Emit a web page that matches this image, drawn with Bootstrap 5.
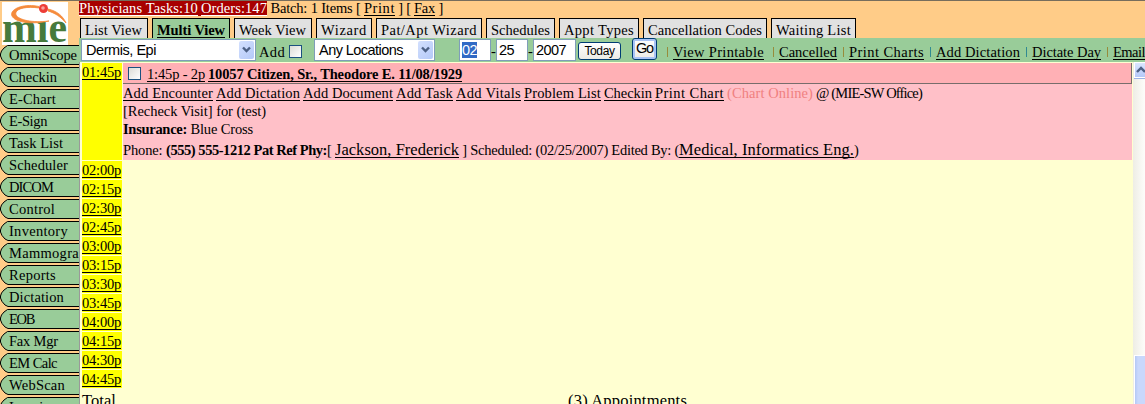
<!DOCTYPE html>
<html lang="en"><head><meta charset="utf-8"><title>Scheduler</title>
<link rel="stylesheet" href="https://cdn.jsdelivr.net/npm/bootstrap@5.3.0/dist/css/bootstrap.min.css">
<style>
body{width:1145px;height:404px;overflow:hidden;background:#ffcc88;color:#000;font:14.5px/18px "Liberation Serif",serif;border-top:1px solid #776d5c}
a{color:#000;text-decoration:underline;text-underline-offset:2px;text-decoration-thickness:1px;text-decoration-skip-ink:none}
[data-w]{white-space:pre;display:inline-block;flex:none}
.side{width:79px;height:403px;flex:none;overflow:hidden}
.logo{display:block;margin:1px 0 0 2px}
.pill{position:relative;height:20px;margin-bottom:2px;line-height:21px;padding-left:9px;white-space:nowrap;overflow:hidden}
.pill svg{position:absolute;left:0;top:0}
.pill span{position:relative}
.main{width:1066px;flex:none;height:403px;overflow:hidden}
.topline{height:17px;line-height:14px}
.alerts{background:#a80000;height:15px;gap:3px}
.alerts a{color:#fff}
.tabs{height:20px;gap:4px;padding-left:1px}
.tab-i{border:1px solid #000;border-bottom:0;background:#e1e1e1;height:21px;line-height:22px;padding-left:4px;flex:none;overflow:hidden}
.tab-i a{text-decoration:none}
.tab-i.on{background:#99cc99;font-weight:bold}.tab-i.on a{text-decoration:underline}
.tools{background:#99cc99;height:24px;position:relative}
.field{background:#fff;border:1px solid #7f9db9;height:22px;font:14.5px/21px "Liberation Sans",sans-serif;padding-left:4px;flex:none;margin-top:1px;position:relative}
.arr{position:absolute;right:1px;top:1px;width:15px;height:18px;background:linear-gradient(135deg,#d3e0fe,#b4c9f8);border-radius:2px}
.arr svg{position:absolute;left:3px;top:5px}
.chk{width:13px;height:13px;border:1px solid #1c5180;background:linear-gradient(135deg,#dcdcd7,#fff);flex:none}
.xb{font-family:"Liberation Sans",sans-serif;border:1px solid #003c74;border-radius:3px;background:linear-gradient(#fff,#ecebe5);text-align:center;flex:none}
.sep{background:#978c3c;width:1px;height:10px;margin:3px 1px 0;flex:none}
.sep.b{background:#318a92}
.grid-area{background:#ffffd1;border-left:1px solid #999;width:1054px;height:342px;padding:1px 1px 0 2px;flex:none}
.tm{width:40px;background:#ffff00;flex:none}
.appt{background:#ffc0c8;width:1009px;height:97px;margin-left:1px}
.ahead{background:#ffb0b5;height:21px;border-right:1px solid #776d6c;border-bottom:1px solid #776d6c;padding-left:5px}
.big{font-size:16.5px}
.slot{height:18px;margin-top:1px;line-height:19px}
.sb{width:12px;height:342px;background:linear-gradient(90deg,#eeede5,#fdfdfa);flex:none;padding-left:1px}
.up{height:16px;background:linear-gradient(#dbe6ff,#b5c9f9);border:1px solid #fff;border-right:0;box-shadow:0 1px #9cb3e6}
.thumb{margin-top:277px;height:60px;background:linear-gradient(90deg,#b4c8f6,#c9d8fc 30%);border:1px solid #fff;border-right:0}
</style></head><body>
<div class="d-flex">
<aside class="side" id="side"><svg class="logo" width="66" height="43" viewBox="0 0 66 43"><rect width="66" height="43" fill="#fff"/><text transform="translate(0 39.500) scale(1 1.12)" font-family="Liberation Serif" font-weight="bold" font-size="40" textLength="65" lengthAdjust="spacingAndGlyphs" fill="#467a3c">mıe</text><path d="M37 4.500C22 1 7 7 10 14c3 6 18 9 37 5-17 2-30-1-33-6-2-6 9-9 23-7zM46 7c9 2 15 7 18 14-5-6-11-10-18-12z" fill="#f58b3c" stroke="#f58b3c" stroke-width=".8"/><circle cx="41.500" cy="6.500" r="4.500" fill="#ed3d37"/><circle cx="41" cy="6" r="1.800" fill="#f9a19b"/></svg></aside>
<main class="main">
<div class="topline d-flex"><div class="alerts d-flex"><a href="#" data-w="119">Physicians Tasks:10</a><a href="#" data-w="66">Orders:147</a></div><span data-w="97"> Batch: 1 Items [ </span><a href="#" data-w="31">Print</a><span data-w="19"> ] [ </span><a href="#" data-w="21">Fax</a><span data-w="8"> ]</span></div>
<nav class="tabs d-flex" id="tabs"></nav>
<div class="tools d-flex">
<div class="field" style="width:175px;margin-left:2px"><span data-w="70">Dermis, Epi</span><i class="arr"><svg width="9" height="8"><path d="M1 1.5l3.500 3.500L8 1.500" fill="none" stroke="#4d6185" stroke-width="2.4"/></svg></i></div>
<span style="padding-top:5px;margin-left:3px" data-w="26">Add</span><i class="chk" style="margin:7px 0 0 4px"></i>
<div class="field" style="width:121px;margin-left:12px"><span data-w="84">Any Locations</span><i class="arr"><svg width="9" height="8"><path d="M1 1.5l3.500 3.500L8 1.500" fill="none" stroke="#4d6185" stroke-width="2.4"/></svg></i></div>
<div class="field" style="width:32px;margin-left:24px;padding:2px 0 0 2px;line-height:16px"><span data-w="15" style="background:#316ac5;color:#fff">02</span></div><span class="mt-1" data-w="5">-</span>
<div class="field" style="width:32px;padding-left:2px"><span data-w="15">25</span></div><span class="mt-1" data-w="5">-</span>
<div class="field" style="width:43px;padding-left:2px"><span data-w="30">2007</span></div>
<div class="xb" style="width:43px;height:18px;margin:4px 0 0 2px;font-size:12px;line-height:17px"><span data-w="30">Today</span></div>
<div class="xb" style="width:25px;height:22px;margin:0 9px 0 11px;font-size:14.5px;line-height:19px;box-shadow:inset 0 0 0 2px #a9c4f5"><span data-w="17">Go</span></div>
<div class="d-flex" id="links" style="padding-top:6px;line-height:17px"></div>
</div>
<div class="d-flex"><div class="grid-area">
<div class="d-flex"><div class="tm"><a href="#" data-w="39">01:45p</a></div>
<div class="appt"><div class="ahead d-flex"><i class="chk" style="margin:4px 6px 0 0"></i><div style="padding-top:2px"><a href="#" data-w="58">1:45p - 2p</a><span data-w="3"> </span><b><a href="#" data-w="254">10057 Citizen, Sr., Theodore E. 11/08/1929</a></b></div></div>
<div class="d-flex" style="gap:3px"><a href="#" data-w="90">Add Encounter</a><a href="#" data-w="84">Add Dictation</a><a href="#" data-w="90">Add Document</a><a href="#" data-w="57">Add Task</a><a href="#" data-w="65">Add Vitals</a><a href="#" data-w="77">Problem List</a><a href="#" data-w="48">Checkin</a><a href="#" data-w="69">Print Chart</a><span data-w="86" style="color:#f08080">(Chart Online)</span><span data-w="106">@ (MIE-SW Office)</span></div>
<div><span data-w="143">[Recheck Visit] for (test)</span></div>
<div><b data-w="64">Insurance:</b><span data-w="66"> Blue Cross</span></div>
<div class="d-flex align-items-baseline" style="padding-top:3px"><span data-w="43">Phone: </span><b data-w="161">(555) 555-1212 Pat Ref Phy:</b><span data-w="8">[ </span><a class="big" href="#" data-w="124">Jackson, Frederick</a><span data-w="220"> ] Scheduled: (02/25/2007) Edited By: (</span><a class="big" href="#" data-w="175">Medical, Informatics Eng.</a><span>)</span></div>
</div></div>
<div id="slots"></div>
<div class="d-flex big" style="padding-top:4px"><span data-w="34">Total</span><span data-w="119" style="margin-left:452px">(3) Appointments</span></div>
</div><div class="sb"><div class="up"><svg width="11" height="14" class="d-block"><path d="M2 9l4-4 4 4" fill="none" stroke="#4d6185" stroke-width="2.4"/></svg></div><div class="thumb"></div></div></div>
</main></div>
<script>
const $=id=>document.getElementById(id);
$('side').insertAdjacentHTML('beforeend',[['OmniScope',68],['Checkin',48],['E-Chart',47],['E-Sign',38],['Task List',54],['Scheduler',59],['DICOM',44],['Control',46],['Inventory',59],['Mammogra',70],['Reports',47],['Dictation',55],['EOB',25],['Fax Mgr',49],['EM Calc',48],['WebScan',56],['Imaging',49]].map(([t,w])=>`<div class="pill"><svg width="80" height="20"><path d="M81 .5H7.500L4 3 1.500 6 .5 9v2L2 14.500 5 18 8 19.500H81" fill="#99cc99" stroke="#000"/></svg><span data-w="${w}">${t}</span></div>`).join(''));
$('tabs').innerHTML=[['List View',57,68],['Multi View',68,78],['Week View',67,78],['Wizard',46,56],['Pat/Apt Wizard',96,106],['Schedules',59,69],['Appt Types',70,80],['Cancellation Codes',114,124],['Waiting List',75,85]].map(([t,w,b],i)=>`<div class="tab-i ${i==1?'on':''}" style="width:${b}px"><a href="#" data-w="${w}">${t}</a></div>`).join('');
$('links').innerHTML=[['View Printable',91,5,8],['Cancelled',58,4,5],['Print Charts',75,4,5],['Add Dictation',84,4,5],['Dictate Day',69,4,5],['Email',32,4,0]].map(([t,w,g,m],i)=>`<span class="sep ${i==3||i==4?'b':''}"></span><a href="#" data-w="${w}" style="margin:0 ${m}px 0 ${g-(i==0)}px">${t}</a>`).join('');
let h='';for(let m=120;m<300;m+=15)h+=`<div class="tm slot"><a href="#" data-w="39">0${m/60|0}:${String(m%60).padStart(2,'0')}p</a></div>`;
$('slots').innerHTML=h;
document.querySelectorAll('[data-w]').forEach(e=>{const w=+e.dataset.w;e.style.letterSpacing=(w-e.getBoundingClientRect().width)/e.textContent.length+'px'});
</script>
<script src="https://cdn.jsdelivr.net/npm/bootstrap@5.3.0/dist/js/bootstrap.bundle.min.js"></script>
</body></html>
